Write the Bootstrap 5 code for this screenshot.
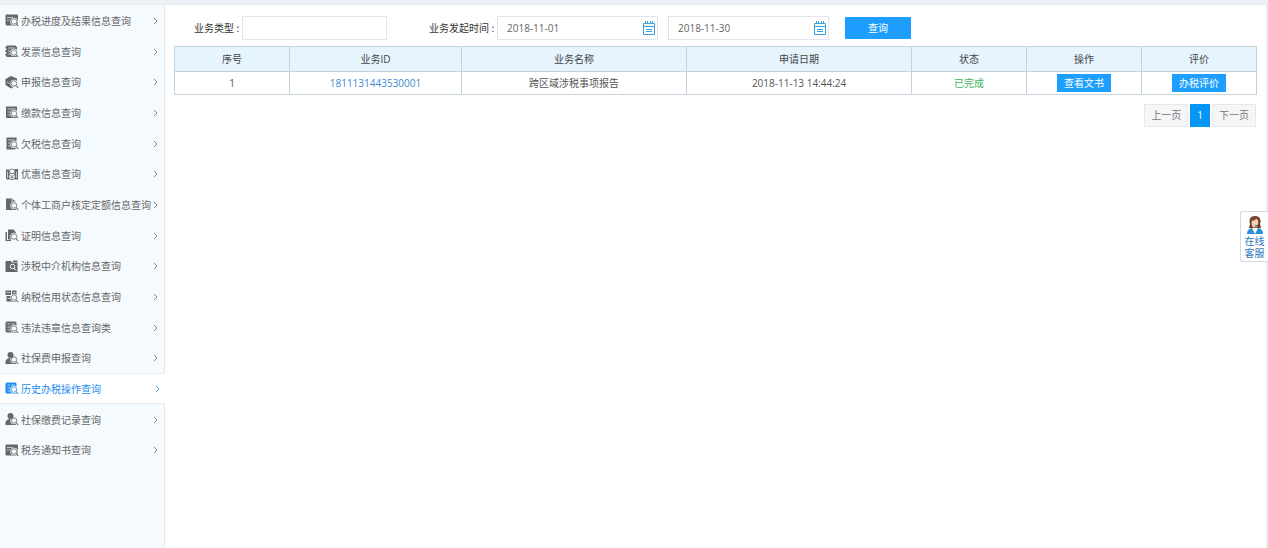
<!DOCTYPE html>
<html lang="zh-CN">
<head>
<meta charset="utf-8">
<meta name="viewport" content="width=device-width, initial-scale=1">
<title>历史办税操作查询</title>
<link href="https://cdn.jsdelivr.net/npm/bootstrap@5.3.0/dist/css/bootstrap.min.css" rel="stylesheet">
<style>
  body { font: 10px/16px "Open Sans", "Noto Sans CJK SC", sans-serif; color: #555; background: #fff; }
  .top-strip { height: 5px; background: #edf1f6; border-bottom: 1px solid #e6eaee; }
  .shell { min-height: calc(100vh - 5px); border-right: 2px solid #e9ebef; }

  .side { width: 165px; background: #f5fafe; border-right: 1px solid #e4e9ec; padding-bottom: 83px; --pane: #f5fafe; }
  .side-link { min-height: 30px; padding: 1px 6px 0 5px; gap: 2px; color: #666; text-decoration: none; white-space: nowrap; border: solid transparent; border-width: 1px 0; }
  .side-link.active { --pane: #fff; color: #1e8cf0; background: #fff; border-color: #e8edf0; margin-right: -1px; padding-right: 5px; }
  .side-ico { width: 14px; height: 13px; flex: none; }
  .side-arrow { width: 5px; height: 8px; flex: none; fill: none; stroke: currentColor; opacity: .8; }
  .cut { stroke: var(--pane); fill: none; stroke-width: 1.3; }
  .halo { fill: var(--pane); stroke: var(--pane); stroke-width: 3; }
  .glass { fill: var(--pane); stroke: currentColor; stroke-width: 1.6; }

  .work { min-width: 0; padding: 11px 9px 0; }
  .query { min-height: 24px; padding-left: 20px; }
  .query label { color: #333; }
  .colon { display: inline-block; width: 8px; text-align: center; font-family: "Noto Sans CJK SC", sans-serif; }
  .query .form-control { height: 24px; padding: 2px 9px; font-size: 10px; line-height: 16px; color: #666; border: 1px solid #e1e4e8; border-radius: 0; }
  .query .kind-box { width: 145px; margin-right: 42px; }
  .date-box { width: 161px; }
  .date-box + .date-box { margin-left: 10px; }
  .date-ico { width: 12px; height: 14px; right: 3px; top: 5px; }
  .btn-flat { --bs-btn-color: #fff; --bs-btn-bg: #1e9fff; --bs-btn-hover-color: #fff; --bs-btn-hover-bg: #0d8fee; font-size: 10px; line-height: 18px; border: 0; border-radius: 0; padding: 0 7px; }
  .btn-query { width: 66px; line-height: 22px; }

  .grid-table { table-layout: fixed; font-size: 10px; border-color: #c5d1db; margin: 6px 0 9px; text-align: center; vertical-align: middle; }
  .grid-table th { background: #e6f4fd; color: #444; font-weight: 400; padding: 4px; }
  .grid-table td { color: #555; padding: 2px 4px; }
  .c-id { width: 15.9%; } .c-wide { width: 20.8%; }
  .grid-table td a { color: #3a8bd0; text-decoration: none; }
  .grid-table .done { color: #45b35a; }

  .pager { gap: 2px; padding-right: 1px; }
  .pager .page-item .page-link { font-size: 10px; line-height: 15px; padding: 3px 6px; border: 1px solid #e6e7ea; border-radius: 0; color: #777; background: #f5f6f8; margin: 0; }
  .pager .page-item.active .page-link { background: #0596f5; border-color: #0596f5; color: #fff; }

  .helper { top: 211px; right: 0; width: 28px; padding: 3px 3px 2px; font-size: 10px; line-height: 12px; color: #2b73b8; background: #fff; border: 1px solid #cfdbe5; border-right: 0; border-radius: 3px 0 0 3px; text-decoration: none; }
  .helper svg { width: 18px; height: 20px; }
</style>
</head>
<body>
<svg width="0" height="0" class="position-absolute" aria-hidden="true">
  <symbol id="lens" viewBox="0 0 28 26"><circle class="halo" cx="18" cy="15" r="6"/><path class="halo" d="M22 19l4 5"/><circle class="glass" cx="18" cy="15" r="5.500"/><path d="M22 19l4.500 5" stroke="currentColor" stroke-width="2.200"/></symbol>
  <symbol id="i-progress" viewBox="0 0 28 26"><path fill="currentColor" d="M2 1h22a2 2 0 0 1 2 2v20H4a3 3 0 0 1-3-3V3z"/><path class="cut" d="M4 7h12M4 12h5"/><use href="#lens"/></symbol>
  <symbol id="i-invoice" viewBox="0 0 28 26"><path fill="currentColor" d="M4 1h17l3 3v20H4l-3-3v-4h2v-3H1v-4h2V7H1V4z"/><path class="cut" d="M6 6h14M6 12h5M6 18h5"/><use href="#lens"/></symbol>
  <symbol id="i-declare" viewBox="0 0 28 26"><path fill="currentColor" d="M12 0l12 5v13l-12 7-11-7V6z"/><path class="cut" d="M4 12l5 3"/><use href="#lens"/></symbol>
  <symbol id="i-pay" viewBox="0 0 28 26"><path fill="currentColor" d="M2 1h22v23H2z"/><path class="cut" d="M5 6h16M5 12h5M5 18h5"/><use href="#lens"/></symbol>
  <symbol id="i-owe" viewBox="0 0 28 26"><path fill="currentColor" d="M3 1h20v20l-3 4H3z"/><path class="cut" d="M6 6h14M6 12h5M6 18h5"/><use href="#lens"/></symbol>
  <symbol id="i-favor" viewBox="0 0 28 26"><path fill="currentColor" d="M2 3h7v20H4l-2-2zM19 2h7v21h-7z"/><path class="cut" d="M5 7v13M23 7v13"/><circle class="glass" cx="14" cy="7" r="5"/><circle class="glass" cx="14" cy="17" r="6.500"/><path d="M11 14l3 3 3-3M14 17v5M11 18h6" fill="none" stroke="currentColor" stroke-width="1.500"/></symbol>
  <symbol id="i-quota" viewBox="0 0 28 26"><path fill="currentColor" d="M2 1h12l8 7v16H2z"/><path class="cut" d="M14 2v6h7"/><use href="#lens"/></symbol>
  <symbol id="i-proof" viewBox="0 0 28 26"><path fill="currentColor" d="M1 6h3v16h8v2H1zM6 1h11l5 6v14H6z"/><use href="#lens"/></symbol>
  <symbol id="i-agency" viewBox="0 0 28 26"><path fill="currentColor" d="M1 2h11l2 3h11v19H1zM16 1h9v3h-9z"/><circle cx="15" cy="13" r="4.500" fill="none" stroke="#f5fafe" stroke-width="2"/><path d="M18 16l4 5" stroke="#f5fafe" stroke-width="2"/></symbol>
  <symbol id="i-credit" viewBox="0 0 28 26"><path fill="currentColor" d="M1 1h11v9H1zM14 1h9v9h-9zM3 12h20v11H3z"/><path class="cut" d="M3 5h7M16 5h5M5 17h6"/><use href="#lens"/></symbol>
  <symbol id="i-rule" viewBox="0 0 28 26"><path fill="currentColor" d="M4 1h16a3 3 0 0 1 3 3v19H4a3 3 0 0 1-3-3V4a3 3 0 0 1 3-3z"/><path class="cut" d="M5 6h5M13 6h7M5 12h5M5 18h5"/><use href="#lens"/></symbol>
  <symbol id="i-person" viewBox="0 0 28 26"><path fill="currentColor" d="M8 12h8l6 6v6H1v-4q0-5 7-8z"/><use href="#lens"/><circle fill="currentColor" cx="11" cy="6" r="6"/></symbol>
  <symbol id="i-chev" viewBox="0 0 5 8"><path d="M1 1l3 3-3 3"/></symbol>
  <symbol id="i-date" viewBox="0 0 12 14"><path d="M.5 2.500h11v11H.5zM.5 5.500h11M3 8.500h6M3 10.500h6M2.500 0v3M4.500 0v3M7.500 0v3M9.500 0v3" fill="none" stroke="#38a0dc"/></symbol>
</svg>

<div class="top-strip"></div>
<div class="shell d-flex">
  <nav class="side d-flex flex-column flex-shrink-0" aria-label="查询菜单">
    <a class="side-link d-flex flex-fill align-items-center" href="#"><svg class="side-ico"><use href="#i-progress"/></svg><span class="flex-fill">办税进度及结果信息查询</span><svg class="side-arrow"><use href="#i-chev"/></svg></a>
    <a class="side-link d-flex flex-fill align-items-center" href="#"><svg class="side-ico"><use href="#i-invoice"/></svg><span class="flex-fill">发票信息查询</span><svg class="side-arrow"><use href="#i-chev"/></svg></a>
    <a class="side-link d-flex flex-fill align-items-center" href="#"><svg class="side-ico"><use href="#i-declare"/></svg><span class="flex-fill">申报信息查询</span><svg class="side-arrow"><use href="#i-chev"/></svg></a>
    <a class="side-link d-flex flex-fill align-items-center" href="#"><svg class="side-ico"><use href="#i-pay"/></svg><span class="flex-fill">缴款信息查询</span><svg class="side-arrow"><use href="#i-chev"/></svg></a>
    <a class="side-link d-flex flex-fill align-items-center" href="#"><svg class="side-ico"><use href="#i-owe"/></svg><span class="flex-fill">欠税信息查询</span><svg class="side-arrow"><use href="#i-chev"/></svg></a>
    <a class="side-link d-flex flex-fill align-items-center" href="#"><svg class="side-ico"><use href="#i-favor"/></svg><span class="flex-fill">优惠信息查询</span><svg class="side-arrow"><use href="#i-chev"/></svg></a>
    <a class="side-link d-flex flex-fill align-items-center" href="#"><svg class="side-ico"><use href="#i-quota"/></svg><span class="flex-fill">个体工商户核定定额信息查询</span><svg class="side-arrow"><use href="#i-chev"/></svg></a>
    <a class="side-link d-flex flex-fill align-items-center" href="#"><svg class="side-ico"><use href="#i-proof"/></svg><span class="flex-fill">证明信息查询</span><svg class="side-arrow"><use href="#i-chev"/></svg></a>
    <a class="side-link d-flex flex-fill align-items-center" href="#"><svg class="side-ico"><use href="#i-agency"/></svg><span class="flex-fill">涉税中介机构信息查询</span><svg class="side-arrow"><use href="#i-chev"/></svg></a>
    <a class="side-link d-flex flex-fill align-items-center" href="#"><svg class="side-ico"><use href="#i-credit"/></svg><span class="flex-fill">纳税信用状态信息查询</span><svg class="side-arrow"><use href="#i-chev"/></svg></a>
    <a class="side-link d-flex flex-fill align-items-center" href="#"><svg class="side-ico"><use href="#i-rule"/></svg><span class="flex-fill">违法违章信息查询类</span><svg class="side-arrow"><use href="#i-chev"/></svg></a>
    <a class="side-link d-flex flex-fill align-items-center" href="#"><svg class="side-ico"><use href="#i-person"/></svg><span class="flex-fill">社保费申报查询</span><svg class="side-arrow"><use href="#i-chev"/></svg></a>
    <a class="side-link active d-flex flex-fill align-items-center" href="#" aria-current="page"><svg class="side-ico"><use href="#i-rule"/></svg><span class="flex-fill">历史办税操作查询</span><svg class="side-arrow"><use href="#i-chev"/></svg></a>
    <a class="side-link d-flex flex-fill align-items-center" href="#"><svg class="side-ico"><use href="#i-person"/></svg><span class="flex-fill">社保缴费记录查询</span><svg class="side-arrow"><use href="#i-chev"/></svg></a>
    <a class="side-link d-flex flex-fill align-items-center" href="#"><svg class="side-ico"><use href="#i-progress"/></svg><span class="flex-fill">税务通知书查询</span><svg class="side-arrow"><use href="#i-chev"/></svg></a>
  </nav>

  <main class="work flex-fill">
    <form class="query d-flex flex-wrap align-items-center">
      <label for="kind">业务类型<span class="colon">:</span></label>
      <input id="kind" class="form-control kind-box" type="text">
      <label for="from">业务发起时间<span class="colon">:</span></label>
      <div class="date-box position-relative">
        <input id="from" class="form-control" type="text" value="2018-11-01">
        <svg class="date-ico position-absolute" aria-hidden="true"><use href="#i-date"/></svg>
      </div>
      <div class="date-box position-relative">
        <input id="to" class="form-control" type="text" value="2018-11-30" aria-label="结束时间">
        <svg class="date-ico position-absolute" aria-hidden="true"><use href="#i-date"/></svg>
      </div>
      <button class="btn btn-flat btn-query ms-3" type="button">查询</button>
    </form>

    <table class="table table-bordered grid-table">
      <colgroup><col><col class="c-id"><col class="c-wide"><col class="c-wide"><col><col><col></colgroup>
      <thead>
        <tr><th scope="col">序号</th><th scope="col">业务ID</th><th scope="col">业务名称</th><th scope="col">申请日期</th><th scope="col">状态</th><th scope="col">操作</th><th scope="col">评价</th></tr>
      </thead>
      <tbody>
        <tr>
          <td>1</td>
          <td><a href="#">1811131443530001</a></td>
          <td>跨区域涉税事项报告</td>
          <td>2018-11-13 14:44:24</td>
          <td class="done">已完成</td>
          <td><button class="btn btn-flat" type="button">查看文书</button></td>
          <td><button class="btn btn-flat" type="button">办税评价</button></td>
        </tr>
      </tbody>
    </table>

    <nav aria-label="分页">
      <ul class="pagination pager justify-content-end mb-0">
        <li class="page-item"><a class="page-link" href="#">上一页</a></li>
        <li class="page-item active" aria-current="page"><a class="page-link" href="#">1</a></li>
        <li class="page-item"><a class="page-link" href="#">下一页</a></li>
      </ul>
    </nav>
  </main>
</div>

<a class="helper position-fixed text-center" href="#">
  <svg class="d-block mx-auto" viewBox="0 0 18 20" aria-hidden="true">
    <path d="M4 9Q2 1 9 1t5 8l1 4H3z" fill="#6b3f2a"/>
    <ellipse cx="9" cy="8" rx="3.500" ry="4.500" fill="#f8cfae"/>
    <path d="M5 6Q9 6 11 3q1 3 2 3-1-4-4-4T5 6z" fill="#7d4b30"/>
    <path d="M1 19q0-5 5-6l3 3 3-3q5 1 5 6z" fill="#2d8fdb"/>
    <path d="M6 13l3 6 3-6-3 1z" fill="#fff"/>
    <path d="M13 7q1 4-4 4" fill="none" stroke="#333"/>
  </svg>
  在线<br>客服
</a>
<script src="https://cdn.jsdelivr.net/npm/bootstrap@5.3.0/dist/js/bootstrap.bundle.min.js"></script>
</body>
</html>
